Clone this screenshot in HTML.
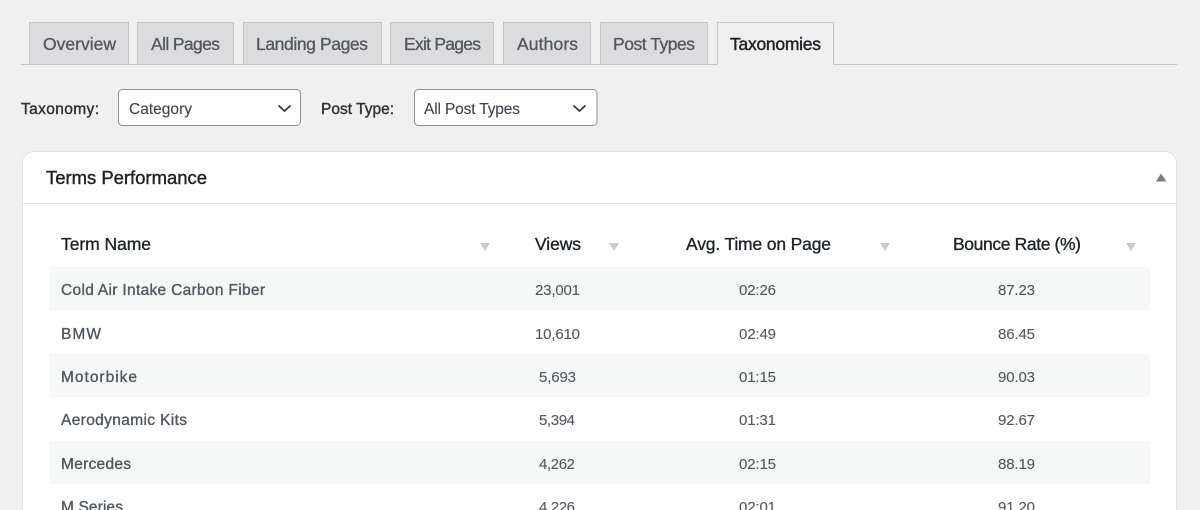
<!DOCTYPE html>
<html><head><meta charset="utf-8"><style>
html,body{margin:0;padding:0;width:1200px;height:510px;overflow:hidden;background:#f0f0f1}
svg{display:block;position:absolute;left:0;top:0}
text{font-family:"Liberation Sans",sans-serif}
.t{font-size:17.5px;fill:#50575e;stroke:#50575e;stroke-width:.3px}
.a{font-size:17.5px;fill:#1d2327;stroke:#1d2327;stroke-width:.45px}
.l{font-size:15.5px;fill:#2c3338;stroke:#2c3338;stroke-width:.4px}
.s{font-size:15.5px;fill:#3c434a;stroke:#3c434a;stroke-width:.1px}
.h{font-size:17.5px;fill:#1d2327;stroke:#1d2327;stroke-width:.35px}
.n{font-size:15.5px;fill:#50575e;stroke:#50575e;stroke-width:.35px}
.c{font-size:15px;fill:#50575e;stroke:#50575e;stroke-width:.1px}
.p{font-size:18.5px;fill:#1d2327;stroke:#1d2327;stroke-width:.4px}
</style></head><body>
<svg width="1200" height="510" viewBox="0 0 1200 510" xmlns="http://www.w3.org/2000/svg">
<rect width="1200" height="510" fill="#f0f0f1"/>
<rect x="21" y="64" width="1156" height="1" fill="#c3c4c7"/>
<g fill="#dcdcde" stroke="#c3c4c7">
<rect x="29.5" y="22.5" width="99" height="42"/>
<rect x="137.5" y="22.5" width="96" height="42"/>
<rect x="243.5" y="22.5" width="138" height="42"/>
<rect x="390.5" y="22.5" width="103" height="42"/>
<rect x="503.5" y="22.5" width="87" height="42"/>
<rect x="600.5" y="22.5" width="107" height="42"/>
</g>
<path d="M717.5 65V22.5H833.5V65" fill="#f0f0f1" stroke="#c3c4c7"/>
<rect x="718" y="64" width="115" height="1" fill="#f0f0f1"/>
<text class="t" x="43" y="50" textLength="73">Overview</text>
<text class="t" x="151" y="50" textLength="69">All Pages</text>
<text class="t" x="256" y="50" textLength="112">Landing Pages</text>
<text class="t" x="404" y="50" textLength="77">Exit Pages</text>
<text class="t" x="517" y="50" textLength="61">Authors</text>
<text class="t" x="613" y="50" textLength="82">Post Types</text>
<text class="a" x="730" y="50" textLength="91">Taxonomies</text>
<text class="l" x="21" y="114" textLength="78">Taxonomy:</text>
<text class="l" x="321" y="114" textLength="73">Post Type:</text>
<rect x="118.500" y="89.500" width="182" height="36" rx="4" fill="#fff" stroke="#8c8f94"/>
<rect x="414.500" y="89.500" width="182.500" height="36" rx="4" fill="#fff" stroke="#8c8f94"/>
<text class="s" x="129" y="114" textLength="63">Category</text>
<text class="s" x="424" y="114" textLength="96">All Post Types</text>
<path d="M278.500 105.500l6 5.500 6-5.500M573.500 105.500l6 5.500 6-5.500" fill="none" stroke="#2c3338" stroke-width="1.700"/>
<path d="M22.500 520V163a11.500 11.500 0 0 1 11.500-11.500H1165a11.500 11.500 0 0 1 11.500 11.500V520Z" fill="#fff" stroke="#e4e4e6"/>
<rect x="23" y="203" width="1153" height="1" fill="#e2e4e7"/>
<text class="p" x="46" y="184" textLength="161">Terms Performance</text>
<path d="M1156 181.500l5-8 5.500 8Z" fill="#787c82"/>
<rect x="49" y="267" width="1101" height="43.500" fill="#f6f7f7"/>
<rect x="49" y="354" width="1101" height="43" fill="#f6f7f7"/>
<rect x="49" y="441" width="1101" height="43" fill="#f6f7f7"/>
<text class="h" x="61" y="250" textLength="90">Term Name</text>
<text class="h" x="535" y="250" textLength="46">Views</text>
<text class="h" x="686" y="250" textLength="145">Avg. Time on Page</text>
<text class="h" x="953" y="250" textLength="128">Bounce Rate (%)</text>
<path d="M480 243h10l-5 8ZM609 243h10l-5 8ZM880 243h10l-5 8ZM1126 243h10l-5 8Z" fill="#c9cacc"/>
<text class="n" x="61" y="295" textLength="204">Cold Air Intake Carbon Fiber</text>
<text class="n" x="61" y="339" textLength="40">BMW</text>
<text class="n" x="61" y="382" textLength="76">Motorbike</text>
<text class="n" x="61" y="425" textLength="126">Aerodynamic Kits</text>
<text class="n" x="61" y="469" textLength="70">Mercedes</text>
<text class="n" x="61" y="512" textLength="62">M Series</text>
<text class="c" x="535" y="295" textLength="45">23,001</text>
<text class="c" x="535" y="339" textLength="45">10,610</text>
<text class="c" x="539" y="382" textLength="37">5,693</text>
<text class="c" x="539" y="425" textLength="36">5,394</text>
<text class="c" x="539" y="469" textLength="36">4,262</text>
<text class="c" x="539" y="512" textLength="36">4,226</text>
<text class="c" x="739" y="295" textLength="37">02:26</text>
<text class="c" x="739" y="339" textLength="37">02:49</text>
<text class="c" x="739" y="382" textLength="37">01:15</text>
<text class="c" x="739" y="425" textLength="37">01:31</text>
<text class="c" x="739" y="469" textLength="37">02:15</text>
<text class="c" x="739" y="512" textLength="37">02:01</text>
<text class="c" x="998" y="295" textLength="37">87.23</text>
<text class="c" x="998" y="339" textLength="37">86.45</text>
<text class="c" x="998" y="382" textLength="37">90.03</text>
<text class="c" x="998" y="425" textLength="37">92.67</text>
<text class="c" x="998" y="469" textLength="37">88.19</text>
<text class="c" x="998" y="512" textLength="37">91.20</text>
</svg>
</body></html>
